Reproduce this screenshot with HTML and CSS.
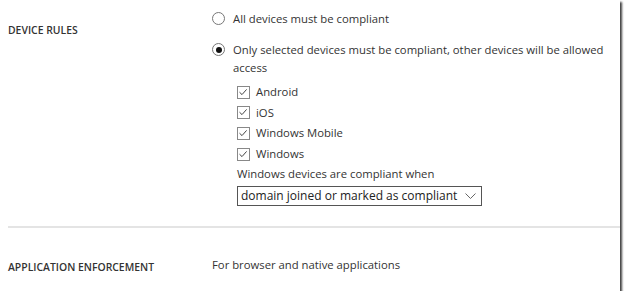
FILE: index.html
```html
<!DOCTYPE html>
<html lang="en">
<head>
  <meta charset="UTF-8">
  <title>Device Rules</title>
  <link rel="stylesheet" href="styles.css">
</head>
<body>
  <div class="frame">
    <div class="section device-section">
      <div class="section-label">DEVICE RULES</div>
      <div class="section-body">
        <div class="radio-row">
          <span class="radio"></span>
          <span class="radio-text">All devices must be compliant</span>
        </div>
        <div class="radio-row second">
          <span class="radio checked"></span>
          <span class="radio-text">Only selected devices must be compliant, other devices will be allowed access</span>
        </div>

        <div class="sub-options">
          <div class="check-row"><span class="checkbox"><svg viewBox="0 0 12 12" width="12" height="12"><path d="M2.5 6.2 L5 8.6 L9.6 3.4" fill="none" stroke="#444" stroke-width="1"/></svg></span>Android</div>
          <div class="check-row"><span class="checkbox"><svg viewBox="0 0 12 12" width="12" height="12"><path d="M2.5 6.2 L5 8.6 L9.6 3.4" fill="none" stroke="#444" stroke-width="1"/></svg></span>iOS</div>
          <div class="check-row"><span class="checkbox"><svg viewBox="0 0 12 12" width="12" height="12"><path d="M2.5 6.2 L5 8.6 L9.6 3.4" fill="none" stroke="#444" stroke-width="1"/></svg></span>Windows Mobile</div>
          <div class="check-row"><span class="checkbox"><svg viewBox="0 0 12 12" width="12" height="12"><path d="M2.5 6.2 L5 8.6 L9.6 3.4" fill="none" stroke="#444" stroke-width="1"/></svg></span>Windows</div>

          <div class="select-label">Windows devices are compliant when</div>
          <div class="select-box">
            <span>domain joined or marked as compliant</span>
            <svg class="chevron" viewBox="0 0 11 6" width="11" height="6"><path d="M0.5 0.5 L5.5 5.5 L10.5 0.5" fill="none" stroke="#666" stroke-width="1"/></svg>
          </div>
        </div>
      </div>
    </div>

    <div class="separator"></div>

    <div class="section app-section">
      <div class="section-label">APPLICATION ENFORCEMENT</div>
      <div class="section-body">For browser and native applications</div>
    </div>
  </div>
</body>
</html>
```

FILE: styles.css
```css
body {
  margin: 0;
  background: #ffffff;
  font-family: 'Open Sans', 'Noto Sans', sans-serif;
  font-size: 11.3px;
  color: #333333;
}

.frame {
  width: 620px;
  height: 291px;
  background: #ffffff;
  box-shadow: 2px 2px 2px rgba(0, 0, 0, 0.75);
  overflow: hidden;
}

.section {
  display: flex;
}

.section-label {
  width: 204px;
  padding-left: 8px;
  flex-shrink: 0;
  font-size: 10.4px;
  font-weight: 600;
  color: #333333;
}

.section-body {
  flex: 1;
  line-height: 18px;
}

.device-section {
  padding-top: 10px;
  height: 216px;
}

.device-section .section-label {
  padding-top: 13px;
}

.radio-row {
  display: flex;
  align-items: flex-start;
  gap: 8px;
}

.radio-row.second {
  margin-top: 13px;
}

.radio {
  width: 11px;
  height: 11px;
  border: 1px solid #777777;
  border-radius: 50%;
  flex-shrink: 0;
  margin-top: 2px;
  position: relative;
}

.radio.checked::after {
  content: '';
  position: absolute;
  left: 2.5px;
  top: 2.5px;
  width: 6px;
  height: 6px;
  border-radius: 50%;
  background: #111111;
}

.sub-options {
  margin-left: 25px;
  margin-top: 5px;
}

.check-row {
  display: flex;
  align-items: center;
  gap: 6px;
  height: 20.6px;
}

.checkbox {
  width: 11px;
  height: 11px;
  border: 1px solid #888888;
  display: flex;
  flex-shrink: 0;
}

.checkbox svg {
  margin: -1px 0 0 -1px;
}

.select-label {
  margin-top: 1px;
}

.select-box {
  width: 245px;
  height: 20px;
  margin-top: 3px;
  border: 1px solid #555555;
  display: flex;
  align-items: center;
  justify-content: space-between;
  padding: 0 5px 0 3px;
  box-sizing: border-box;
  font-size: 12px;
  color: #222222;
}

.separator {
  height: 2px;
  margin-left: 8px;
  background: #e4e4e4;
}

.app-section {
  padding-top: 28px;
  line-height: 18px;
}

.app-section .section-label {
  padding-top: 2px;
}
```
